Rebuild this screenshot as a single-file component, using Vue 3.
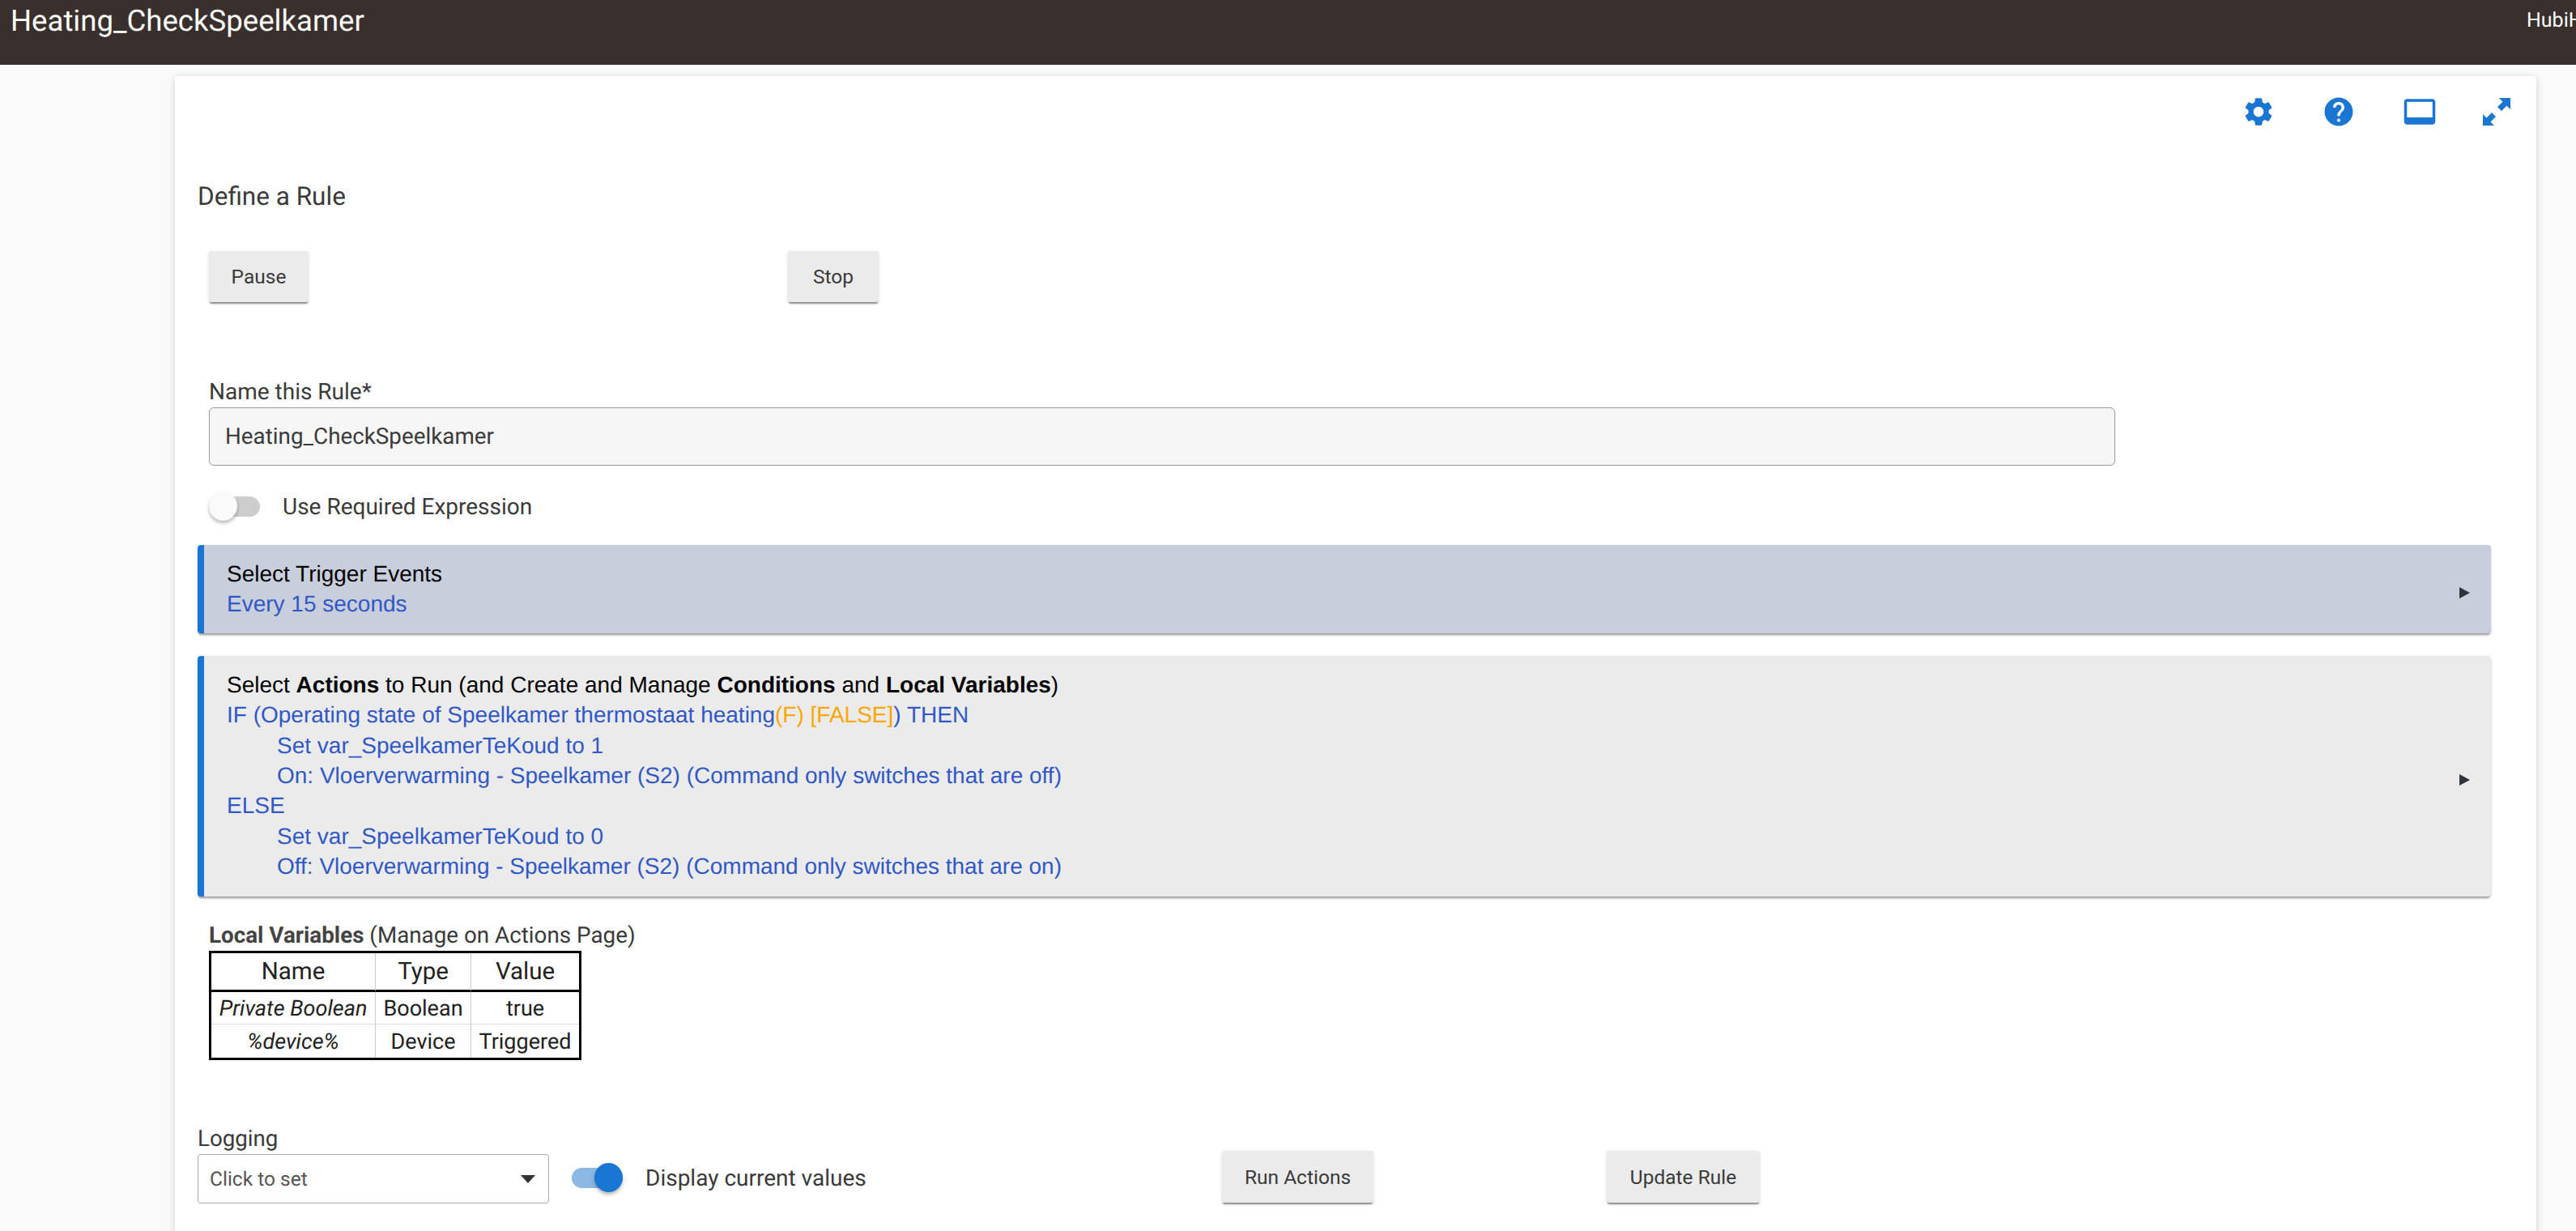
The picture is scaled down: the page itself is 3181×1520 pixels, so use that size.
<script setup>
const lines = [
  { indent: false, text: 'IF (Operating state of Speelkamer thermostaat heating', warn: '(F) [FALSE]', tail: ') THEN' },
  { indent: true, text: 'Set var_SpeelkamerTeKoud to 1' },
  { indent: true, text: 'On: Vloerverwarming - Speelkamer (S2) (Command only switches that are off)' },
  { indent: false, text: 'ELSE' },
  { indent: true, text: 'Set var_SpeelkamerTeKoud to 0' },
  { indent: true, text: 'Off: Vloerverwarming - Speelkamer (S2) (Command only switches that are on)' }
]
const vars = [
  { name: 'Private Boolean', type: 'Boolean', value: 'true' },
  { name: '%device%', type: 'Device', value: 'Triggered' }
]
</script>

<template>
  <div class="page">
    <header class="topbar">
      <div class="title">Heating_CheckSpeelkamer</div>
      <div class="hub">HubiH</div>
    </header>

    <main class="card">
      <div class="tools">
        <svg class="ico gear" viewBox="0 0 24 24"><path d="M19.14 12.94c.04-.3.06-.61.06-.94 0-.32-.02-.64-.07-.94l2.03-1.58c.18-.14.23-.41.12-.61l-1.92-3.32c-.12-.22-.37-.29-.59-.22l-2.39.96c-.5-.38-1.03-.7-1.62-.94l-.36-2.54c-.04-.24-.24-.41-.48-.41h-3.84c-.24 0-.43.17-.47.41l-.36 2.54c-.59.24-1.13.57-1.62.94l-2.39-.96c-.22-.08-.47 0-.59.22L2.74 8.87c-.12.21-.08.47.12.61l2.03 1.58c-.05.3-.09.63-.09.94s.02.64.07.94l-2.03 1.58c-.18.14-.23.41-.12.61l1.92 3.32c.12.22.37.29.59.22l2.39-.96c.5.38 1.03.7 1.62.94l.36 2.54c.05.24.24.41.48.41h3.84c.24 0 .44-.17.47-.41l.36-2.54c.59-.24 1.13-.56 1.62-.94l2.39.96c.22.08.47 0 .59-.22l1.92-3.32c.12-.22.07-.47-.12-.61l-2.01-1.58zM12 15.6c-1.98 0-3.6-1.62-3.6-3.6s1.62-3.6 3.6-3.6 3.6 1.62 3.6 3.6-1.62 3.6-3.6 3.6z"/></svg>
        <svg class="ico help" viewBox="0 0 24 24"><path d="M12 2C6.48 2 2 6.48 2 12s4.48 10 10 10 10-4.48 10-10S17.52 2 12 2zm1 17h-2v-2h2v2zm2.07-7.75l-.9.92C13.45 12.9 13 13.5 13 15h-2v-.5c0-1.1.45-2.1 1.17-2.83l1.24-1.26c.37-.36.59-.86.59-1.41 0-1.1-.9-2-2-2s-2 .9-2 2H8c0-2.21 1.79-4 4-4s4 1.79 4 4c0 .88-.36 1.68-.93 2.25z"/></svg>
        <svg class="ico panel" viewBox="0 0 24 24"><path d="M21 3H3c-1.1 0-2 .9-2 2v14c0 1.1.9 2 2 2h18c1.1 0 2-.9 2-2V5c0-1.1-.9-2-2-2zm0 13H3V5h18v11z"/></svg>
        <svg class="ico expand" viewBox="0 0 34 34"><path d="M20 0h14v14l-4.500-4.500-6.500 6.500-5-5 6.500-6.500zM14 34H0V20l4.500 4.500 6.500-6.500 5 5-6.500 6.500z"/></svg>
      </div>

      <h1 class="heading">Define a Rule</h1>

      <div class="controls">
        <button class="btn pause">Pause</button>
        <button class="btn stop">Stop</button>
      </div>

      <section class="name-field">
        <label class="field-label">Name this Rule*</label>
        <div class="text-input">Heating_CheckSpeelkamer</div>
      </section>

      <div class="switch-row">
        <span class="switch"><span class="track"></span><span class="thumb"></span></span>
        <span class="switch-label">Use Required Expression</span>
      </div>

      <section class="panel-box trigger">
        <div class="box-body">
          <div>Select Trigger Events</div>
          <div class="blue">Every 15 seconds</div>
        </div>
        <span class="caret"></span>
      </section>

      <section class="panel-box actions">
        <div class="box-body">
          <div>Select <b>Actions</b> to Run (and Create and Manage <b>Conditions</b> and <b>Local Variables</b>)</div>
          <div v-for="(l, i) in lines" :key="i" class="blue" :class="{ indent: l.indent }">{{ l.text }}<span v-if="l.warn" class="warn">{{ l.warn }}</span>{{ l.tail }}</div>
        </div>
        <span class="caret"></span>
      </section>

      <div class="vars-title"><b>Local Variables</b> (Manage on Actions Page)</div>
      <table class="vars">
        <thead>
          <tr><th class="c1">Name</th><th class="c2">Type</th><th class="c3">Value</th></tr>
        </thead>
        <tbody>
          <tr v-for="v in vars" :key="v.name">
            <td class="c1 var-name">{{ v.name }}</td>
            <td class="c2">{{ v.type }}</td>
            <td class="c3">{{ v.value }}</td>
          </tr>
        </tbody>
      </table>

      <div class="footer">
        <div class="logging">
          <label class="log-label">Logging</label>
          <div class="select">
            <span>Click to set</span>
            <span class="select-arrow"></span>
          </div>
        </div>
        <div class="switch-row current">
          <span class="switch on"><span class="track"></span><span class="thumb"></span></span>
          <span class="switch-label">Display current values</span>
        </div>
        <button class="btn wide">Run Actions</button>
        <button class="btn wide update">Update Rule</button>
      </div>
    </main>
  </div>
</template>

<style>
html, body {
  margin: 0;
  height: 100%;
  overflow: hidden;
  background: #fafafa;
}
</style>

<style scoped>
.page {
  height: 1520px;
  overflow: hidden;
  background: #fafafa;
  font-family: Roboto, "Liberation Sans", sans-serif;
  color: #3a3a3a;
  text-rendering: geometricPrecision;
}
.topbar {
  height: 80px;
  background: #392f2d;
  color: #fff;
  display: grid;
  grid-template-columns: 3120px 200px;
  overflow: hidden;
}
.title {
  padding-left: 13px;
  font-size: 36.6px;
  line-height: 52px;
}
.hub {
  font-size: 25px;
  line-height: 52px;
  white-space: nowrap;
}
.card {
  margin: 14px 0 0 216px;
  width: 2916px;
  min-height: 1500px;
  box-sizing: border-box;
  padding: 23px 56px 0 28px;
  background: #fff;
  border-radius: 4px;
  box-shadow: 0 2px 10px rgba(0, 0, 0, 0.18);
}
.tools {
  display: flex;
  justify-content: flex-end;
  align-items: center;
  height: 42px;
  margin-right: -24px;
}
.ico {
  width: 42px;
  height: 42px;
  fill: #1976d2;
  flex: none;
}
.help { margin-left: 57px; }
.panel { margin-left: 58px; }
.expand { margin-left: 57px; width: 34px; height: 34px; }
.heading {
  margin: 65px 0 0;
  font-size: 31.5px;
  font-weight: 400;
  line-height: 38px;
}
.controls {
  display: grid;
  grid-template-columns: 715px auto;
  justify-content: start;
  margin: 48px 0 0 14px;
}
.btn {
  height: 63px;
  padding: 0;
  border: 0;
  border-radius: 3px;
  background: #ebebeb;
  color: #3a3a3a;
  font-family: inherit;
  font-size: 24.5px;
  box-shadow: 0 3px 2px -1px rgba(0, 0, 0, 0.42), 0 1px 4px rgba(0, 0, 0, 0.12);
}
.pause { width: 123px; }
.stop { width: 112px; }
.name-field {
  margin: 91px 0 0 14px;
}
.field-label {
  display: block;
  font-size: 28px;
  line-height: 39px;
}
.text-input {
  width: 2354px;
  height: 72px;
  box-sizing: border-box;
  padding-left: 19px;
  border: 1.5px solid #999;
  border-radius: 6px;
  background: #f6f6f6;
  font-size: 27.8px;
  line-height: 69px;
}
.switch-row {
  display: flex;
  align-items: center;
  height: 37px;
  margin: 32px 0 0 14px;
}
.switch {
  position: relative;
  width: 63px;
  height: 37px;
  flex: none;
  margin-right: 28px;
}
.track {
  position: absolute;
  left: 0;
  right: 0;
  top: 6px;
  height: 25px;
  border-radius: 13px;
  background: #cdcdcd;
}
.thumb {
  position: absolute;
  left: 0;
  top: 0;
  width: 35px;
  height: 36px;
  border-radius: 50%;
  background: #fafafa;
  box-shadow: 0 3px 4px rgba(0, 0, 0, 0.28);
}
.switch.on .track { background: #8bb9e3; }
.switch.on .thumb { left: 28px; background: #1976d2; }
.switch-label {
  font-size: 28px;
  line-height: 37px;
}
.panel-box {
  display: flex;
  align-items: flex-start;
  justify-content: space-between;
  box-sizing: border-box;
  padding-right: 26px;
  border-left: 8px solid #1976d2;
  border-radius: 4px;
  box-shadow: 0 3px 3px -1px rgba(0, 0, 0, 0.4), 0 0 3px rgba(0, 0, 0, 0.1);
  font-family: "Liberation Sans", Arial, sans-serif;
  font-size: 28px;
  line-height: 37.33px;
  color: #000;
}
.trigger {
  height: 109px;
  margin-top: 29px;
  background: #c8cedb;
}
.actions {
  height: 297px;
  margin-top: 28px;
  background: #ebebeb;
}
.box-body {
  padding: 17px 0 0 28px;
}
.blue { color: #3058c8; }
.warn { color: #ffa500; }
.indent { padding-left: 62px; }
.caret {
  width: 0;
  height: 0;
  margin-top: 51.5px;
  border-left: 13px solid #30343b;
  border-top: 7.5px solid transparent;
  border-bottom: 7.5px solid transparent;
}
.actions .caret { margin-top: 146px; }
.vars-title {
  margin: 28px 0 0 14px;
  font-size: 27.8px;
  line-height: 39px;
}
.vars-title b { font-weight: 700; color: #444; }
.vars {
  margin: 0 0 0 14px;
  width: 458px;
  table-layout: fixed;
  border-collapse: separate;
  border-spacing: 0;
  border: 3px solid #000;
  color: #222;
  text-align: center;
}
.c1 { width: 202px; }
.c2 { width: 117px; }
.c3 { width: 133px; }
.vars th {
  height: 45px;
  padding: 0;
  font-size: 29.5px;
  font-weight: 400;
  border-bottom: 3px solid #000;
}
.vars td {
  height: 39px;
  padding: 0;
  font-size: 27px;
  border-bottom: 1px solid #ddd;
}
.vars tbody tr:last-child td { border-bottom: 0; height: 41px; }
.vars th:not(:last-child), .vars td:not(:last-child) {
  border-right: 1px solid #ccc;
}
.var-name { font-style: italic; }
.footer {
  display: grid;
  grid-template-columns: 434px 831px 475px auto;
  align-items: start;
  margin-top: 78px;
}
.log-label {
  display: block;
  font-size: 27.7px;
  line-height: 38px;
}
.select {
  height: 61px;
  box-sizing: border-box;
  display: flex;
  align-items: center;
  justify-content: space-between;
  padding: 0 16px 0 14px;
  border: 1.5px solid #aaa;
  border-radius: 4px;
  color: #555;
  font-size: 24.5px;
}
.select-arrow {
  width: 0;
  height: 0;
  border-top: 10px solid #333;
  border-left: 9.5px solid transparent;
  border-right: 9.5px solid transparent;
}
.current {
  margin: 49px 0 0 28px;
}
.wide {
  width: 187px;
  height: 64px;
  margin-top: 34px;
}
.update { width: 189px; }
</style>
